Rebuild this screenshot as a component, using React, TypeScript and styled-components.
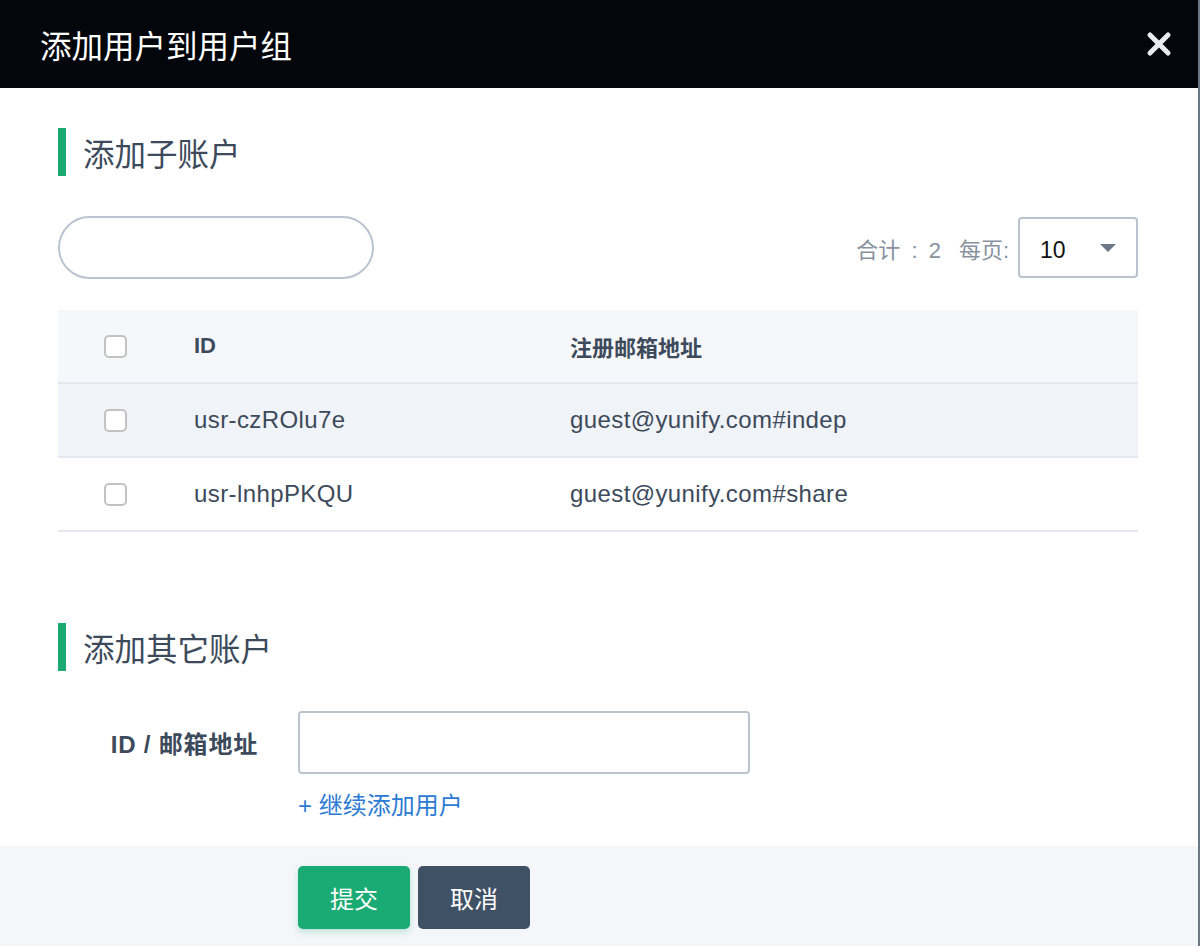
import styled, { createGlobalStyle } from 'styled-components';

interface UserRow {
  id: string
  email: string
}

const users: UserRow[] = [
  { id: 'usr-czROlu7e', email: 'guest@yunify.com#indep' },
  { id: 'usr-lnhpPKQU', email: 'guest@yunify.com#share' },
]

const GlobalStyle = createGlobalStyle`
  html, body {
    margin: 0;
    padding: 0;
    background: #6c7785;
  }
  body {
    font-family: "Liberation Sans", "Noto Sans CJK SC", sans-serif;
    color: #3c4a5b;
  }
`

const CloseIcon = () => (
  <svg width="26" height="26" viewBox="0 0 26 26">
    <path d="M4 4 L22 22 M22 4 L4 22" stroke="#e8ebf0" strokeWidth="5" strokeLinecap="round" />
  </svg>
)

export default function App() {
  return (
    <>
      <GlobalStyle />
      <Dialog>
        <Header>
          <Title>添加用户到用户组</Title>
          <CloseBtn aria-label="close"><CloseIcon /></CloseBtn>
        </Header>

        <Body>
          <SectionTitle>添加子账户</SectionTitle>

          <Toolbar>
            <SearchInput />
            <Pager>
              <PagerText $wide>合计 : 2</PagerText>
              <PagerText>每页:</PagerText>
              <PageSelect>
                <span>10</span>
                <Caret />
              </PageSelect>
            </Pager>
          </Toolbar>

          <Table>
            <thead>
              <HeadRow>
                <CheckCell><Checkbox /></CheckCell>
                <HeadCell style={{ width: '376px' }}>ID</HeadCell>
                <HeadCell>注册邮箱地址</HeadCell>
              </HeadRow>
            </thead>
            <tbody>
              {users.map((u, index) => (
                <Row key={u.id} $hover={index === 0}>
                  <CheckCell><Checkbox /></CheckCell>
                  <Cell>{u.id}</Cell>
                  <Cell>{u.email}</Cell>
                </Row>
              ))}
            </tbody>
          </Table>

          <SectionTitle $spaced>添加其它账户</SectionTitle>

          <FormRow>
            <Label>ID / 邮箱地址</Label>
            <FieldCol>
              <TextInput />
              <AddLink>+ 继续添加用户</AddLink>
            </FieldCol>
          </FormRow>
        </Body>

        <Footer>
          <Button $variant="primary">提交</Button>
          <Button $variant="dark">取消</Button>
        </Footer>
      </Dialog>
    </>
  )
}

const Dialog = styled.div`
  width: 1198px;
  height: 946px;
  background: #fff;
  display: flex;
  flex-direction: column;
`

const Header = styled.div`
  height: 88px;
  flex: none;
  background: #03060b;
  display: flex;
  align-items: center;
  justify-content: space-between;
  padding: 0 26px 0 40px;
`

const Title = styled.h1`
  margin: 0;
  font-size: 31.5px;
  font-weight: 400;
  color: #fff;
  font-family: "Noto Sans CJK SC", sans-serif;
`

const CloseBtn = styled.button`
  background: transparent;
  border: none;
  padding: 0;
  width: 26px;
  height: 26px;
  display: flex;
  cursor: pointer;
`

const Body = styled.div`
  flex: 1;
  padding: 40px 60px 0 58px;
`

const SectionTitle = styled.h2<{ $spaced?: boolean }>`
  margin: ${p => (p.$spaced ? '91px' : '0')} 0 0;
  height: 48px;
  border-left: 8px solid #1aab74;
  padding-left: 17px;
  display: flex;
  align-items: center;
  font-size: 31.5px;
  font-weight: 400;
  color: #3c4a5b;
  font-family: "Noto Sans CJK SC", sans-serif;
`

const Toolbar = styled.div`
  margin-top: 40px;
  display: flex;
  align-items: center;
  justify-content: space-between;
`

const SearchInput = styled.input`
  width: 316px;
  height: 63px;
  box-sizing: border-box;
  border: 2px solid #bac4d1;
  border-radius: 32px;
  outline: none;
`

const Pager = styled.div`
  display: flex;
  align-items: center;
  gap: 18px;
`

const PagerText = styled.span<{ $wide?: boolean }>`
  font-size: 22px;
  color: #87929e;
  word-spacing: ${p => (p.$wide ? '5px' : '0')};
`

const PageSelect = styled.div`
  margin-left: -9px;
  width: 120px;
  height: 61px;
  box-sizing: border-box;
  border: 2px solid #b9c3cf;
  border-radius: 4px;
  display: flex;
  align-items: center;
  justify-content: space-between;
  padding: 5px 20px 0 20px;
  font-size: 23px;
  color: #111;
`

const Caret = styled.span`
  margin-top: -4px;
  width: 0;
  height: 0;
  border-left: 8px solid transparent;
  border-right: 8px solid transparent;
  border-top: 8px solid #6b7887;
`

const Table = styled.table`
  margin-top: 31px;
  width: 1080px;
  border-collapse: collapse;
  border-spacing: 0;
`

const HeadRow = styled.tr`
  height: 73px;
  background: #f5f7fa;
  border-bottom: 2px solid #e3e8ee;
`

const Row = styled.tr<{ $hover?: boolean }>`
  height: 74px;
  background: ${p => (p.$hover ? '#f0f3f7' : '#fff')};
  border-bottom: 2px solid #e3e8ee;
`

const CheckCell = styled.td`
  width: 90px;
  padding: 0 0 0 46px;
  vertical-align: middle;
  line-height: 0;
`

const HeadCell = styled.th`
  text-align: left;
  padding: 0;
  font-size: 22px;
  font-weight: 700;
  color: #3c4a5b;
`

const Cell = styled.td`
  padding: 0;
  font-size: 24px;
  letter-spacing: 0.4px;
  color: #3c4a5b;
`

const Checkbox = styled.span`
  display: inline-block;
  width: 23px;
  height: 23px;
  box-sizing: border-box;
  border: 2px solid #c2c2c2;
  border-radius: 5px;
  background: #fff;
`

const FormRow = styled.div`
  margin-top: 40px;
  display: flex;
  gap: 40px;
`

const Label = styled.label`
  width: 200px;
  height: 63px;
  display: flex;
  align-items: center;
  justify-content: flex-end;
  font-size: 24px;
  letter-spacing: 0.8px;
  font-weight: 700;
  color: #3c4a5b;
`

const FieldCol = styled.div`
  display: flex;
  flex-direction: column;
`

const TextInput = styled.input`
  width: 452px;
  height: 63px;
  box-sizing: border-box;
  border: 2px solid #bac4d1;
  border-radius: 4px;
  outline: none;
`

const AddLink = styled.a`
  margin-top: 18px;
  font-size: 24px;
  line-height: 28px;
  color: #2b7ad4;
  cursor: pointer;
`

const Footer = styled.div`
  height: 100px;
  flex: none;
  background: #f4f6fa;
  display: flex;
  gap: 8px;
  padding: 20px 0 0 298px;
  box-sizing: border-box;
`

const Button = styled.button<{ $variant: 'primary' | 'dark' }>`
  width: 112px;
  height: 63px;
  border: none;
  border-radius: 5px;
  font-size: 24px;
  color: #fff;
  font-family: "Noto Sans CJK SC", sans-serif;
  background: ${p => (p.$variant === 'primary' ? '#1aab74' : '#3f5164')};
  box-shadow: ${p => (p.$variant === 'primary' ? '0 3px 6px rgba(26, 171, 116, 0.25)' : 'none')};
  cursor: pointer;
`
